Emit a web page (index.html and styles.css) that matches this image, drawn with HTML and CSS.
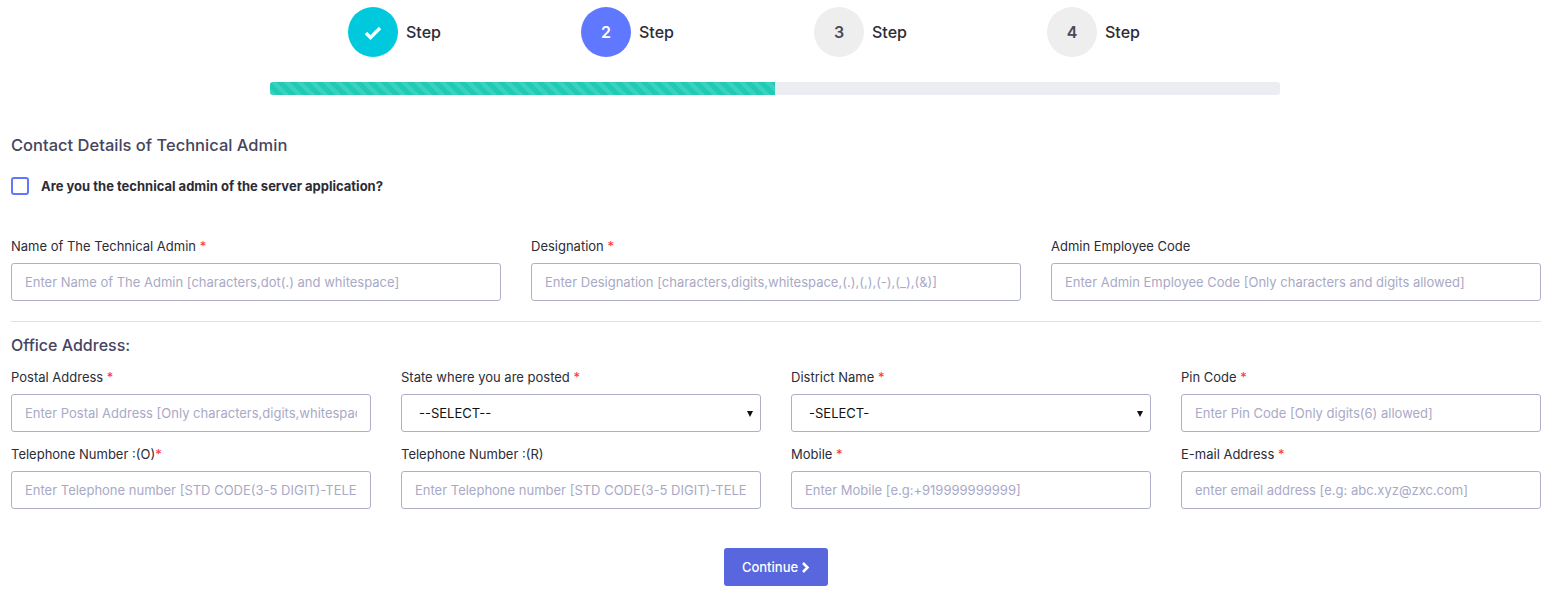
FILE: index.html

```html
<!DOCTYPE html>
<html>

<head>
<title>Contact Details of Technical Admin</title>
<meta charset="UTF-8">
<link rel="stylesheet" href="styles.css">
</head>

<body>
  <div class="wizard">
    <ul class="steps">
      <li class="step done">
        <span class="step-num">
          <svg width="18" height="15" viewBox="0 0 18 15"><path d="M2 8l4.5 4.5L16 3" fill="none" stroke="#fff" stroke-width="3.4"/></svg>
        </span>
        <span class="step-label">Step</span>
      </li>
      <li class="step active"><span class="step-num">2</span><span class="step-label">Step</span></li>
      <li class="step"><span class="step-num">3</span><span class="step-label">Step</span></li>
      <li class="step"><span class="step-num">4</span><span class="step-label">Step</span></li>
    </ul>
    <div class="progress"><div class="progress-bar" style="width:50%"></div></div>
  </div>

  <form class="form">
    <h3 class="title">Contact Details of Technical Admin</h3>

    <label class="check">
      <input type="checkbox">
      <span class="check-box"></span>
      <span>Are you the technical admin of the server application?</span>
    </label>

    <div class="row row-3">
      <div class="field">
        <label>Name of The Technical Admin <em>*</em></label>
        <input type="text" placeholder="Enter Name of The Admin [characters,dot(.) and whitespace]">
      </div>
      <div class="field">
        <label>Designation <em>*</em></label>
        <input type="text" placeholder="Enter Designation [characters,digits,whitespace,(.),(,),(-),(_),(&amp;)]">
      </div>
      <div class="field">
        <label>Admin Employee Code</label>
        <input type="text" placeholder="Enter Admin Employee Code [Only characters and digits allowed]">
      </div>
    </div>

    <hr class="divider">

    <h4 class="subtitle">Office Address:</h4>

    <div class="row row-4">
      <div class="field">
        <label>Postal Address <em>*</em></label>
        <input type="text" placeholder="Enter Postal Address [Only characters,digits,whitespace allowed]">
      </div>
      <div class="field">
        <label>State where you are posted <em>*</em></label>
        <div class="select"><select><option>--SELECT--</option></select></div>
      </div>
      <div class="field">
        <label>District Name <em>*</em></label>
        <div class="select"><select><option>-SELECT-</option></select></div>
      </div>
      <div class="field">
        <label>Pin Code <em>*</em></label>
        <input type="text" placeholder="Enter Pin Code [Only digits(6) allowed]">
      </div>
      <div class="field">
        <label>Telephone Number :(O)<em>*</em></label>
        <input type="text" placeholder="Enter Telephone number [STD CODE(3-5 DIGIT)-TELEPHONE NUMBER]">
      </div>
      <div class="field">
        <label>Telephone Number :(R)</label>
        <input type="text" placeholder="Enter Telephone number [STD CODE(3-5 DIGIT)-TELEPHONE NUMBER]">
      </div>
      <div class="field">
        <label>Mobile <em>*</em></label>
        <input type="text" placeholder="Enter Mobile [e.g:+919999999999]">
      </div>
      <div class="field">
        <label>E-mail Address <em>*</em></label>
        <input type="text" placeholder="enter email address [e.g: abc.xyz@zxc.com]">
      </div>
    </div>

    <div class="actions">
      <button type="button" class="btn">Continue
        <svg width="9" height="11" viewBox="0 0 9 11"><path d="M2 1l4.5 4.5L2 10" fill="none" stroke="#fff" stroke-width="2.6"/></svg>
      </button>
    </div>
  </form>
</body>
</html>
```

FILE: styles.css

```css
html, body {
  margin: 0;
  padding: 0;
  background: #fff;
  font-family: Inter, "Open Sans", Arial, sans-serif;
  font-size: 13px;
  color: #212529;
}

.wizard {
  width: 1010px;
  margin: 0 auto;
  padding-top: 7px;
}

.steps {
  display: flex;
  list-style: none;
  margin: 0 0 25px;
  padding: 0 0 0 78px;
}

.step {
  display: flex;
  align-items: center;
  width: 252.5px;
}

.step-num {
  display: flex;
  align-items: center;
  justify-content: center;
  width: 50px;
  height: 50px;
  margin-right: 8px;
  border-radius: 50%;
  background: #eeeeee;
  color: #4a4a55;
  font-size: 16px;
  font-weight: 600;
}

.step.done .step-num { background: #00c9dd; }
.step.active .step-num { background: #6078ff; color: #fff; }

.step-label {
  font-size: 16px;
  font-weight: 500;
  color: #2c2c36;
}

.progress {
  height: 13px;
  border-radius: 3px;
  background: #ebedf2;
  overflow: hidden;
}

.progress-bar {
  height: 100%;
  background-color: #1fcbb5;
  background-image: linear-gradient(45deg, rgba(255,255,255,.12) 25%, transparent 25%, transparent 50%, rgba(255,255,255,.12) 50%, rgba(255,255,255,.12) 75%, transparent 75%, transparent);
  background-size: 13px 13px;
}

.form {
  padding: 40px 9px 0 11px;
}

.title {
  margin: 0 0 21px;
  font-size: 16.5px;
  line-height: 20px;
  font-weight: 500;
  color: #454560;
}

.check {
  display: flex;
  align-items: center;
  margin-bottom: 40px;
  font-size: 13px;
  line-height: 20px;
  font-weight: 700;
  color: #2c2c36;
}

.check input { display: none; }

.check-box {
  box-sizing: border-box;
  width: 18px;
  height: 18px;
  margin-right: 12px;
  border: 2px solid #6078ff;
  border-radius: 3px;
}

.row {
  display: grid;
  column-gap: 30px;
}

.row-3 { grid-template-columns: repeat(3, 1fr); }
.row-4 { grid-template-columns: repeat(4, 1fr); row-gap: 12px; }

.field label {
  display: block;
  margin-bottom: 7px;
  line-height: 20px;
  font-size: 13px;
  color: #2c2c36;
}

.field em {
  font-style: normal;
  color: #ff2d3d;
}

.field input,
.field select {
  display: block;
  box-sizing: border-box;
  width: 100%;
  height: 38px;
  padding: 0 13px;
  border: 1px solid #adb0c6;
  border-radius: 3px;
  background: #fff;
  font-family: inherit;
  font-size: 13px;
  outline: none;
}

.field input::placeholder {
  color: #a9a9c6;
  opacity: 1;
}

.field select {
  appearance: none;
  padding-left: 17px;
  color: #111;
}

.select { position: relative; }

.select::after {
  content: "";
  position: absolute;
  right: 8px;
  top: 17px;
  border-top: 6px solid #111;
  border-left: 3px solid transparent;
  border-right: 3px solid transparent;
}

.divider {
  margin: 20px 0 13px;
  border: 0;
  border-top: 1px solid #dfe0e6;
}

.subtitle {
  margin: 0 0 12px;
  font-size: 16px;
  line-height: 20px;
  font-weight: 500;
  color: #454560;
}

.actions {
  display: flex;
  justify-content: center;
  margin-top: 39px;
}

.btn {
  display: flex;
  align-items: center;
  justify-content: center;
  gap: 3px;
  width: 104px;
  height: 38px;
  padding: 0;
  border: 0;
  border-radius: 3px;
  background: #5867dd;
  color: #fff;
  font-family: inherit;
  font-size: 13px;
  font-weight: 500;
}
```
